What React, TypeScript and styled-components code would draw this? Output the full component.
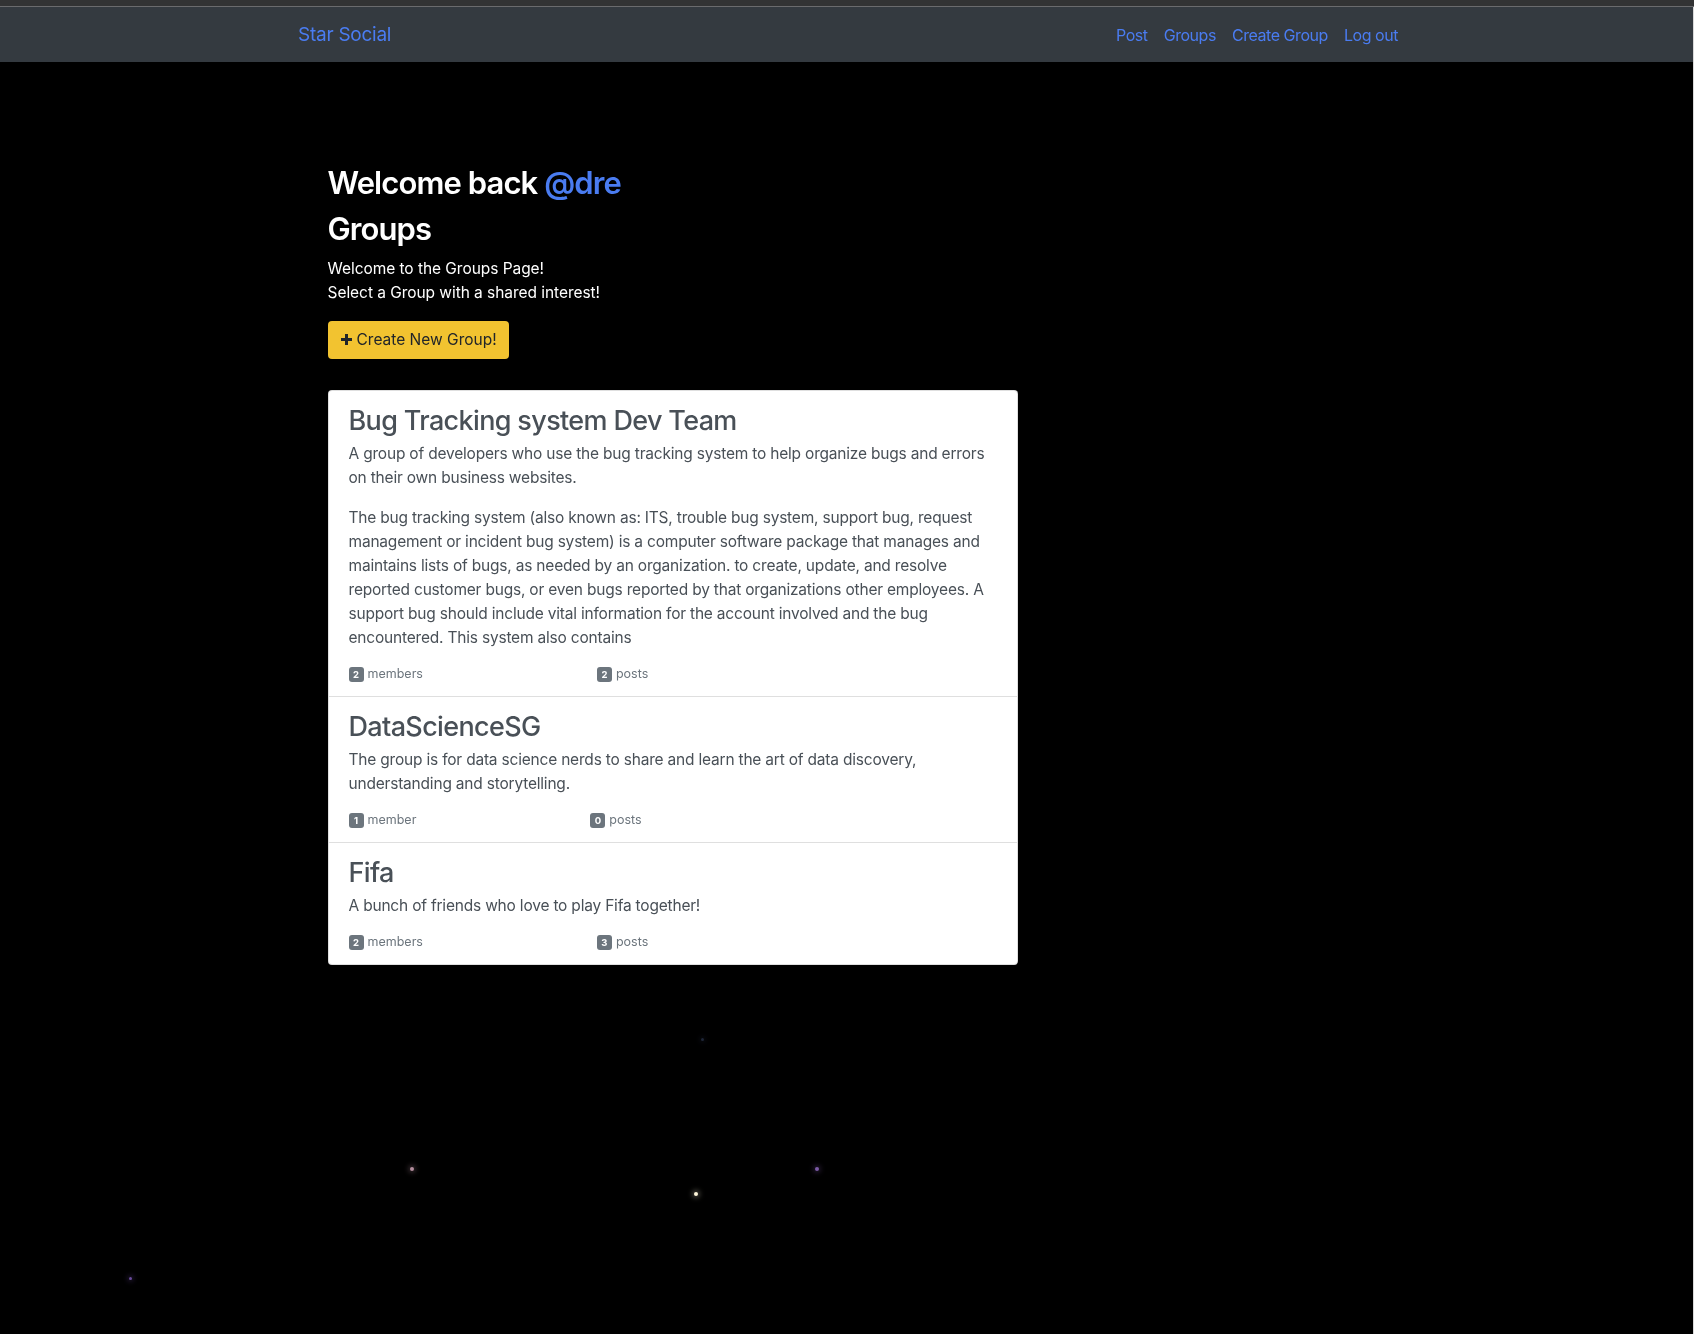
import React from "react";
import styled, { createGlobalStyle } from "styled-components";

const GlobalStyle = createGlobalStyle`
  html, body {
    margin: 0;
    padding: 0;
    background: #000;
  }
  body {
    font-family: Inter, "Noto Sans", "Liberation Sans", sans-serif;
    font-size: 16px;
    line-height: 1.5;
    color: #fff;
  }
  * { box-sizing: border-box; }
`;

const Page = styled.div`
  min-height: 100vh;
  background: #000;
  position: relative;
  display: flex;
  flex-direction: column;
`;

const TopStrip = styled.div`
  height: 7px;
  background: #323334;
  border-bottom: 1px solid #6a6b6d;
`;

const Body = styled.div`
  flex: 1;
  display: flex;
  flex-direction: column;
  border-right: 1px solid #d9d9d9;
  position: relative;
  z-index: 1;
`;

const NavBar = styled.nav`
  height: 55px;
  background: #343a40;
  display: flex;
  justify-content: center;
  padding-left: 3px;
`;

const NavInner = styled.div`
  width: 1100px;
  display: flex;
  align-items: center;
  justify-content: space-between;
  padding-top: 1px;
`;

const Brand = styled.a`
  color: #4a7cf1;
  font-size: 19px;
  text-decoration: none;
  letter-spacing: -0.25px;
`;

const NavLinks = styled.div`
  display: flex;
  gap: 16px;
`;

const NavLink = styled.a`
  color: #4a7cf1;
  font-size: 16px;
  letter-spacing: -0.45px;
  text-decoration: none;
`;

const Main = styled.main`
  width: 1100px;
  margin: 0 auto;
  padding: 102px 0 0 31px;
`;

const Heading = styled.h2`
  margin: 0 0 8px;
  font-size: 31px;
  line-height: 38.4px;
  font-weight: 600;
  color: #fff;
  letter-spacing: -0.9px;
`;

const UserLink = styled.a`
  color: #4a7cf1;
  text-decoration: none;
`;

const Intro = styled.p`
  margin: 0 0 16px;
  font-size: 15.5px;
  line-height: 24px;
  letter-spacing: -0.05px;
  color: #fff;
`;

const WarnButton = styled.a`
  display: inline-flex;
  align-items: center;
  gap: 5px;
  height: 38px;
  padding: 0 12px 0 13px;
  background: #f2c330;
  color: #212529;
  border-radius: 4px;
  font-size: 15.5px;
  text-decoration: none;
`;

const ListGroup = styled.div`
  margin-top: 31px;
  width: 690px;
  background: #fff;
  border: 1px solid rgba(0, 0, 0, 0.125);
  border-radius: 4px;
  display: flex;
  flex-direction: column;
`;

const Item = styled.a`
  display: block;
  padding: 15px 20px 11px;
  color: #495057;
  text-decoration: none;
  & + & {
    border-top: 1px solid #dfdfdf;
  }
`;

const ItemTitle = styled.h3`
  margin: 0 0 6px;
  font-size: 27px;
  line-height: 30px;
  font-weight: 500;
  color: #495057;
  letter-spacing: -0.65px;
`;

const Desc = styled.p`
  margin: 0 0 16px;
  font-size: 15.5px;
  line-height: 24px;
  letter-spacing: -0.2px;
  color: #495057;
  &:last-of-type {
    margin-bottom: 14px;
  }
`;

const Stats = styled.div`
  display: flex;
  align-items: center;
  height: 21px;
  font-size: 12.5px;
  color: #6c757d;
`;

const Stat = styled.span<{ $gap?: number }>`
  display: inline-flex;
  align-items: center;
  gap: 4px;
  margin-left: ${(p) => p.$gap ?? 0}px;
`;

const Badge = styled.span`
  display: inline-flex;
  align-items: center;
  justify-content: center;
  min-width: 15px;
  height: 15px;
  padding: 0 3px;
  border-radius: 3px;
  background: #6c757d;
  color: #fff;
  font-size: 9.5px;
  font-weight: 700;
  line-height: 1;
`;

const StarField = styled.div`
  position: fixed;
  inset: 0;
  pointer-events: none;
  z-index: 0;
`;

const Star = styled.span<{ $x: number; $y: number; $s: number; $c: string }>`
  position: absolute;
  left: ${(p) => p.$x}px;
  top: ${(p) => p.$y}px;
  width: ${(p) => p.$s}px;
  height: ${(p) => p.$s}px;
  border-radius: 50%;
  background: ${(p) => p.$c};
  box-shadow: 0 0 5px 2px ${(p) => p.$c}44;
`;

const PlusIcon = () => (
  <svg width="11" height="11" viewBox="0 0 11 11" aria-hidden="true">
    <path d="M4 0h3v4h4v3H7v4H4V7H0V4h4z" fill="#212529" />
  </svg>
);

type Group = {
  name: string;
  paragraphs: string[];
  members: number;
  posts: number;
};

const groups: Group[] = [
  {
    name: "Bug Tracking system Dev Team",
    paragraphs: [
      "A group of developers who use the bug tracking system to help organize bugs and errors on their own business websites.",
      "The bug tracking system (also known as: ITS, trouble bug system, support bug, request management or incident bug system) is a computer software package that manages and maintains lists of bugs, as needed by an organization. to create, update, and resolve reported customer bugs, or even bugs reported by that organizations other employees. A support bug should include vital information for the account involved and the bug encountered. This system also contains",
    ],
    members: 2,
    posts: 2,
  },
  {
    name: "DataScienceSG",
    paragraphs: [
      "The group is for data science nerds to share and learn the art of data discovery, understanding and storytelling.",
    ],
    members: 1,
    posts: 0,
  },
  {
    name: "Fifa",
    paragraphs: ["A bunch of friends who love to play Fifa together!"],
    members: 2,
    posts: 3,
  },
];

const stars = [
  { x: 410, y: 1167, s: 4, c: "#b48e9e" },
  { x: 694, y: 1192, s: 4, c: "#fff8dc" },
  { x: 815, y: 1167, s: 4, c: "#7b5aa6" },
  { x: 129, y: 1277, s: 3, c: "#6a4b9c" },
  { x: 701, y: 1038, s: 3, c: "#1e2638" },
];

export default function App() {
  return (
    <Page>
      <GlobalStyle />
      <StarField>
        {stars.map((st, i) => (
          <Star key={i} $x={st.x} $y={st.y} $s={st.s} $c={st.c} />
        ))}
      </StarField>
      <TopStrip />
      <Body>
        <NavBar>
          <NavInner>
            <Brand href="#">Star Social</Brand>
            <NavLinks>
              <NavLink href="#">Post</NavLink>
              <NavLink href="#">Groups</NavLink>
              <NavLink href="#">Create Group</NavLink>
              <NavLink href="#">Log out</NavLink>
            </NavLinks>
          </NavInner>
        </NavBar>
        <Main>
          <Heading>
            Welcome back <UserLink href="#">@dre</UserLink>
          </Heading>
          <Heading>Groups</Heading>
          <Intro>
            Welcome to the Groups Page!
            <br />
            Select a Group with a shared interest!
          </Intro>
          <WarnButton href="#">
            <PlusIcon />
            Create New Group!
          </WarnButton>
          <ListGroup>
            {groups.map((g) => (
              <Item href="#" key={g.name}>
                <ItemTitle>{g.name}</ItemTitle>
                {g.paragraphs.map((p, i) => (
                  <Desc key={i}>{p}</Desc>
                ))}
                <Stats>
                  <Stat>
                    <Badge>{g.members}</Badge>
                    {g.members === 1 ? "member" : "members"}
                  </Stat>
                  <Stat $gap={174}>
                    <Badge>{g.posts}</Badge>
                    posts
                  </Stat>
                </Stats>
              </Item>
            ))}
          </ListGroup>
        </Main>
      </Body>
    </Page>
  );
}
